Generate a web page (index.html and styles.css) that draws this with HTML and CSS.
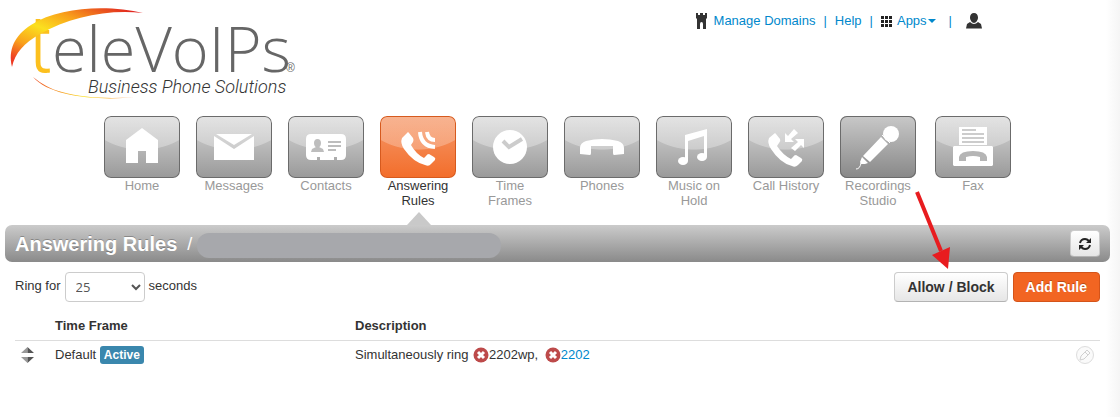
FILE: index.html
```html
<!DOCTYPE html>
<html lang="en">
<head>
    <meta charset="UTF-8">
    <meta name="viewport" content="width=device-width, initial-scale=1.0">
    <title>Answering Rules</title>
    <link rel="stylesheet" href="styles.css">
</head>
<body>
    <header class="header">
        <a class="logo" href="#" aria-label="teleVoIPs Business Phone Solutions">
            <svg width="310" height="104" viewBox="0 0 310 104">
                <defs>
                    <linearGradient id="swoosh-top" x1="0" y1="1" x2="1" y2="0">
                        <stop offset="0.08" stop-color="#ee3a23"/>
                        <stop offset="0.25" stop-color="#f9a11b"/>
                        <stop offset="0.45" stop-color="#fbe01f"/>
                        <stop offset="0.65" stop-color="#f9a11b"/>
                        <stop offset="0.95" stop-color="#e02020"/>
                    </linearGradient>
                    <linearGradient id="swoosh-bottom" x1="0" y1="0" x2="1" y2="0">
                        <stop offset="0" stop-color="#ee4a23"/>
                        <stop offset="0.5" stop-color="#fbe01f"/>
                        <stop offset="1" stop-color="#f4701f"/>
                    </linearGradient>
                </defs>
                <text class="logo-t" x="27" y="72">t</text>
                <text class="logo-name" x="52" y="72">eleVoIPs</text>
                <text class="logo-mark" x="286" y="72">®</text>
                <text class="logo-tagline" x="88" y="93">Business Phone Solutions</text>
                <path fill="url(#swoosh-top)" d="M12 67C8 50 14 36 31 25C60 6 110 5 143 13C108 9 70 17 40 34C24 43 15 53 12 67Z"/>
                <path fill="url(#swoosh-bottom)" d="M33 77C42 84 50 89 62 92C84 98 110 99 135 97C100 101 50 97 33 77Z"/>
            </svg>
        </a>
        <nav class="user-nav">
            <a href="#"><svg width="11" height="16" viewBox="0 0 11 16"><path fill="#333" d="M0 0H2V2H4V0H7V2H9V0H11V5L10 6V16H7V11Q7 9 5.500 9Q4 9 4 11V16H1V6L0 5Z"/></svg>Manage Domains</a>
            <span>|</span>
            <a href="#">Help</a>
            <span>|</span>
            <a class="apps" href="#"><svg width="11" height="11" viewBox="0 0 11 11"><path fill="#222" d="M0 0h3v3H0zM4 0h3v3H4zM8 0h3v3H8zM0 4h3v3H0zM4 4h3v3H4zM8 4h3v3H8zM0 8h3v3H0zM4 8h3v3H4zM8 8h3v3H8z"/></svg>Apps<i class="caret"></i></a>
            <span class="last">|</span>
            <a href="#" aria-label="Profile"><svg class="profile" width="16" height="16" viewBox="0 0 16 16"><path fill="#333" d="M8 0C5.500 0 4 2 4 4.500S6 10 8 10S12 7 12 4.500S10.500 0 8 0ZM4 9L1 11L0 15.500H16L15 11L12 9Q8 13 4 9Z"/></svg></a>
        </nav>
    </header>

    <nav class="main-nav">
        <a href="#">
            <svg class="tile" viewBox="0 0 76 62"><path fill="#fff" d="M38 12L54 24V47H42V35H34V47H22V24Z"/></svg>
            Home
        </a>
        <a href="#">
            <svg class="tile" viewBox="0 0 76 62"><path fill="#fff" d="M20 18H56L38 29ZM18 20L38 33L58 20V44H18Z"/></svg>
            Messages
        </a>
        <a href="#">
            <svg class="tile" viewBox="0 0 76 62">
                <path fill="#fff" d="M23 18H53Q58 18 58 23V39Q58 44 53 44H49V41H46V44H32V41H29V44H23Q18 44 18 39V23Q18 18 23 18Z"/>
                <path fill="#bdbdbd" d="M29.500 23C32 23 33 25 33 27C33 29 32 31 31 31L35 33L36 36H23L24 33L28 31C27 31 26 29 26 27C26 25 27 23 29.500 23ZM40 25H53V27H40ZM40 29H53V31H40ZM40 33H48V35H40Z"/>
            </svg>
            Contacts
        </a>
        <a class="active" href="#">
            <svg class="tile" viewBox="0 0 76 62">
                <path fill="#fff" d="M28 16L22 22Q20 27 24 33Q33 46 45 49Q49 51 51 48L55 44Q56 42 54 41L49 38Q47 38 46 40L44 42Q36 38 31 29L33 26Q34 24 33 22L29 17Z"/>
                <path fill="none" stroke="#fff" stroke-width="4" d="M40 16Q41 30 55 31M47 16Q48 24 55 24"/>
            </svg>
            Answering Rules
        </a>
        <a href="#">
            <svg class="tile" viewBox="0 0 76 62"><circle cx="38" cy="31" r="17" fill="#fff"/><path fill="none" stroke="#ccc" stroke-width="4" d="M31 25L37 31L50 23"/></svg>
            Time Frames
        </a>
        <a href="#">
            <svg class="tile" viewBox="0 0 76 62"><path fill="#fff" d="M16 32Q16 27 22 25Q38 21 54 25Q60 27 60 32V38L50 39Q49 39 49 37V30H27V37Q27 39 26 39L16 38Z"/></svg>
            Phones
        </a>
        <a href="#">
            <svg class="tile" viewBox="0 0 76 62"><path fill="#fff" d="M29 19L51 13V41H48V20L32 25V45H29Z"/><ellipse cx="27" cy="45" rx="5" ry="4" fill="#fff"/><ellipse cx="46" cy="41" rx="5" ry="4" fill="#fff"/></svg>
            Music on Hold
        </a>
        <a href="#">
            <svg class="tile" viewBox="0 0 76 62">
                <path fill="#fff" d="M27 17L21 22Q19 27 23 33Q32 47 44 50Q47 52 50 49L54 45Q55 43 53 42L48 39Q46 39 45 41L43 43Q35 39 29 30L31 27Q33 25 32 23L28 18Z"/>
                <path fill="#fff" d="M46 13L50 17L43 23L46 26H37V17L40 20ZM47 23H56V32L53 29L47 35L43 32L50 26Z"/>
            </svg>
            Call History
        </a>
        <a href="#">
            <svg class="tile flat" viewBox="0 0 76 62">
                <circle cx="51" cy="18" r="8" fill="#fff"/>
                <path fill="#fff" d="M41 21L48 28L30 46L23 40ZM22 41L28 47L25 48L21 48L20 46Z"/>
                <path fill="none" stroke="#fff" d="M42 19L50 27M21 47Q20 53 16 53"/>
            </svg>
            Recordings Studio
        </a>
        <a class="fax" href="#">
            <svg class="tile" viewBox="0 0 76 62">
                <path fill="#fff" d="M24 11H52V29H24ZM19 30H57L58 31V49L57 50H19L18 49V31Z"/>
                <path fill="#ccc" d="M27 13H41V15H27ZM27 17H49V19H27ZM27 21H49V23H27ZM27 25H49V27H27Z"/>
                <path fill="#b5b5b5" d="M24 41Q25 35 38 35Q51 35 52 41V45H45V41Q38 39 31 41V45H24Z"/>
            </svg>
            Fax
        </a>
    </nav>

    <main>
        <div class="title-bar">
            <h1>Answering Rules</h1>
            <span class="divider">/</span>
            <span class="redacted"></span>
            <button class="btn btn-refresh" type="button" aria-label="Refresh">
                <svg width="14" height="14" viewBox="0 0 14 14"><path fill="none" stroke="#222" stroke-width="2" d="M2 6Q3 2 7 2Q9 2 11 4M12 8Q11 12 7 12Q5 12 3 10"/><path fill="#222" d="M13 1V6H8ZM1 13V8H6Z"/></svg>
            </button>
        </div>

        <div class="content">
            <div class="toolbar">
                <label for="ring">Ring for</label>
                <select id="ring">
                    <option>25</option>
                    <option>30</option>
                </select>
                <span>seconds</span>
                <div class="actions">
                    <button class="btn" type="button">Allow / Block</button>
                    <button class="btn btn-primary" type="button">Add Rule</button>
                </div>
            </div>

            <table class="rules">
                <thead>
                    <tr>
                        <th class="col-sort"></th>
                        <th class="col-name">Time Frame</th>
                        <th>Description</th>
                        <th class="col-edit"></th>
                    </tr>
                </thead>
                <tbody>
                    <tr>
                        <td class="col-sort"><svg width="13" height="18" viewBox="0 0 13 18"><path fill="#999" d="M0 7L6.500 1V7ZM0 11H6.500V17Z"/><path fill="#555" d="M6.500 1L13 7H6.500ZM6.500 11H13L6.500 17Z"/></svg></td>
                        <td>Default <span class="label">Active</span></td>
                        <td>
                            Simultaneously ring
                            <svg class="offline" width="16" height="16" viewBox="0 0 16 16"><circle cx="8" cy="8" r="7.500" fill="#bd4a4a"/><path stroke="#fff" stroke-width="3" d="M5 5L11 11M11 5L5 11"/></svg>2202wp,
                            <a href="#"><svg class="offline second" width="16" height="16" viewBox="0 0 16 16"><circle cx="8" cy="8" r="7.500" fill="#bd4a4a"/><path stroke="#fff" stroke-width="3" d="M5 5L11 11M11 5L5 11"/></svg>2202</a>
                        </td>
                        <td class="col-edit">
                            <button class="edit" type="button" aria-label="Edit rule">
                                <svg width="18" height="18" viewBox="0 0 18 18"><circle cx="9" cy="9" r="8.500" fill="#fafafa" stroke="#ddd"/><path fill="none" stroke="#d0d0d0" d="M4 14L5 10L11 4L14 7L8 13ZM9 6L12 9"/></svg>
                            </button>
                        </td>
                    </tr>
                </tbody>
            </table>
        </div>
    </main>

    <!-- Callout pointing at Allow / Block -->
    <svg class="callout" width="40" height="84" viewBox="0 0 40 84"><path stroke="#e81c1f" stroke-width="4" d="M7 3L31 62"/><path fill="#e81c1f" d="M22 66L40 58L38 80Z"/></svg>
</body>
</html>
```
FILE: styles.css
```css
/* General Styling */
* {
    box-sizing: border-box;
}

body {
    position: relative;
    margin: 0;
    min-height: 100vh;
    padding: 0 10px 0 5px;
    font-family: "Liberation Sans", Arial, sans-serif;
    font-size: 13px;
    line-height: 18px;
    color: #333;
    background: linear-gradient(to left, #f5f5f5, #fff 14px);
}

a {
    color: #0088cc;
    text-decoration: none;
}

svg {
    display: block;
    overflow: visible;
}

/* Header */
.header {
    display: flex;
    justify-content: space-between;
    align-items: flex-start;
    height: 116px;
    padding-right: 128px;
}

.logo {
    margin-left: -5px;
}

.logo-name {
    font-family: "Open Sans", sans-serif;
    font-size: 63px;
    font-weight: 300;
    fill: #666;
}

.logo-t {
    font-family: Roboto, sans-serif;
    font-size: 80px;
    font-weight: 300;
    fill: #fcc01e;
}

.logo-mark {
    font-size: 12px;
    fill: #666;
}

.logo-tagline {
    font-family: Roboto, sans-serif;
    font-size: 18px;
    font-style: italic;
    font-weight: 300;
    fill: #333;
}

.user-nav {
    display: flex;
    align-items: center;
    gap: 8px;
    padding-top: 12px;
    color: #0088cc;
}

.user-nav a {
    display: flex;
    align-items: center;
    gap: 7px;
}

.user-nav .apps {
    gap: 5px;
}

.user-nav .last {
    margin: 0 6px 0 5px;
}

.caret {
    margin-left: -4px;
    border: 4px solid transparent;
    border-top-color: #0088cc;
    border-bottom: 0;
}

/* Main navigation */
.main-nav {
    display: flex;
    gap: 16px;
    height: 109px;
    padding-left: 99px;
}

.main-nav a {
    position: relative;
    width: 76px;
    line-height: 15px;
    text-align: center;
    color: #999;
}

.main-nav .fax {
    margin-left: 3px;
}

.tile {
    width: 76px;
    height: 62px;
    border-radius: 7px;
    box-shadow: inset 0 0 0 1px #6b6b6b;
    background:
        radial-gradient(ellipse 60px 44px at 50% -10px, rgba(255, 255, 255, 0.3) 98%, transparent 100%),
        linear-gradient(#d8d8d8, #999);
}

.tile.flat {
    background: linear-gradient(#c8c8c8, #888);
}

.main-nav .active {
    color: #333;
}

.active .tile {
    box-shadow: inset 0 0 0 1px #d65a1e;
    background:
        radial-gradient(ellipse 60px 44px at 50% -10px, rgba(255, 255, 255, 0.25) 98%, transparent 100%),
        linear-gradient(#f59a6c, #f36d2a);
}

.main-nav .active::after {
    content: "";
    position: absolute;
    bottom: 0;
    left: 27px;
    border: 12px solid transparent;
    border-top: 0;
    border-bottom: 13px solid #c9c9c9;
}

/* Title bar */
.title-bar {
    display: flex;
    align-items: center;
    height: 37px;
    padding: 0 10px;
    border-radius: 7px;
    color: #fff;
    background: linear-gradient(#cbcbcb, #8a8a8a);
}

.title-bar h1 {
    margin: 0;
    font-size: 20px;
    line-height: 20px;
    text-shadow: 0 -1px 0 rgba(0, 0, 0, 0.25);
}

.divider {
    margin: 0 5px 0 10px;
    font-size: 18px;
}

.redacted {
    width: 304px;
    height: 25px;
    margin-top: 4px;
    border-radius: 12px;
    background: #a7a8ac;
}

/* Buttons */
.btn {
    height: 30px;
    padding: 0 12px;
    border: 1px solid #ccc;
    border-bottom-color: #b3b3b3;
    border-radius: 4px;
    font-family: inherit;
    font-size: 14px;
    font-weight: bold;
    color: #333;
    background: linear-gradient(#fff, #e6e6e6);
    cursor: pointer;
}

.btn-primary {
    border-color: #d4541a;
    color: #fff;
    background: #f26522;
    text-shadow: 0 -1px 0 rgba(0, 0, 0, 0.25);
}

.btn-refresh {
    width: 30px;
    height: 27px;
    margin-left: auto;
    padding: 0 7px;
}

/* Content */
.content {
    padding: 10px;
}

.toolbar {
    display: flex;
    align-items: center;
    gap: 4px;
}

.toolbar label,
.toolbar span {
    padding-bottom: 3px;
}

.toolbar select {
    width: 80px;
    height: 30px;
    padding: 0 6px;
    border: 1px solid #ccc;
    border-radius: 4px;
    font-family: "Open Sans", sans-serif;
    font-size: 13px;
    color: #555;
    background: #fff;
}

.actions {
    display: flex;
    gap: 5px;
    margin-left: auto;
}

.rules {
    width: 100%;
    margin-top: 10px;
    border-collapse: collapse;
    table-layout: fixed;
}

.rules th,
.rules td {
    padding: 5px 0;
    text-align: left;
}

.rules th {
    border-bottom: 1px solid #ddd;
}

.rules .col-sort {
    width: 40px;
    padding-left: 6px;
}

.col-name {
    width: 300px;
}

.col-edit {
    width: 30px;
}

.label {
    display: inline-block;
    padding: 2px 4px;
    border-radius: 3px;
    font-size: 12px;
    font-weight: bold;
    line-height: 14px;
    color: #fff;
    background: #3a87ad;
}

.offline {
    display: inline-block;
    margin-left: 1px;
    vertical-align: -4px;
}

.second {
    margin-left: 3px;
}

.edit {
    display: block;
    margin-left: 6px;
    padding: 0;
    border: 0;
    background: none;
    cursor: pointer;
}

.callout {
    position: absolute;
    top: 189px;
    left: 910px;
}
```
